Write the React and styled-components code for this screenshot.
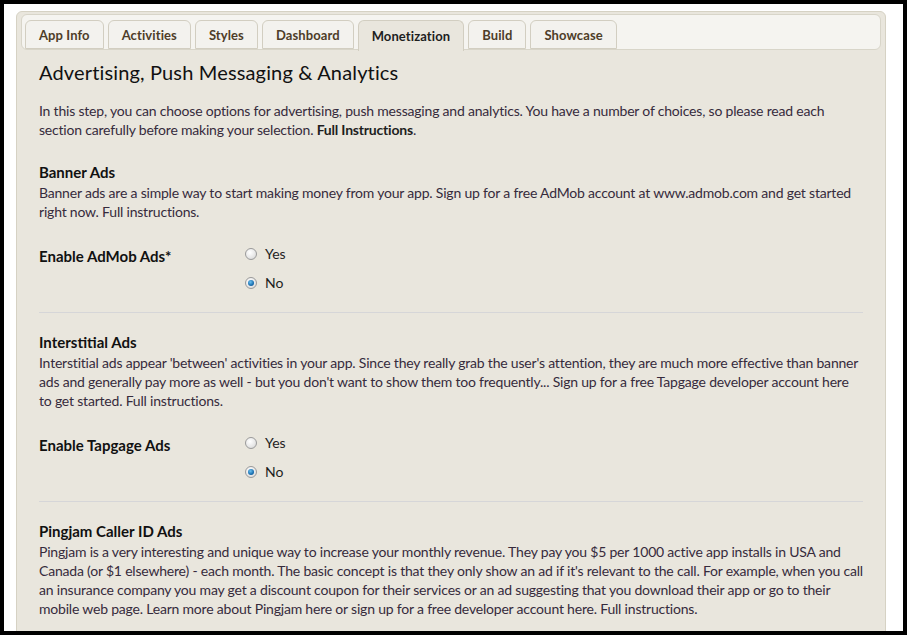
import React from 'react';
import styled, { createGlobalStyle } from 'styled-components';

const GlobalStyle = createGlobalStyle`
  html, body {
    margin: 0;
    padding: 0;
    background: #000;
  }
  body {
    font-family: Lato, "Open Sans", sans-serif;
  }
`;

const Frame = styled.div`
  margin: 4px;
  height: 627px;
  background: #fff;
  overflow: hidden;
  padding: 7px 17px 0 12px;
  box-sizing: border-box;
`;

const Panel = styled.div`
  background: #e9e6dd;
  border: 1px solid #d6d2c4;
  border-radius: 6px;
  padding: 2px 4px 0 4px;
  min-height: 640px;
`;

const TabStrip = styled.div`
  display: flex;
  gap: 4px;
  background: #f5f4f0;
  border: 1px solid #d8d5c9;
  border-radius: 6px;
  padding: 3px 0 0 3px;
  height: 31px;
  align-items: flex-end;
`;

const Tab = styled.div`
  height: ${p => (p.active ? '31px' : '29px')};
  margin-bottom: ${p => (p.active ? '-2px' : '0')};
  padding: 0 13px;
  display: flex;
  align-items: center;
  box-sizing: border-box;
  border: 1px solid #d2cec1;
  border-bottom: ${p => (p.active ? 'none' : '1px solid #d2cec1')};
  border-radius: 6px 6px 0 0;
  background: ${p => (p.active ? '#e9e6dd' : '#f3f2ee')};
  color: ${p => (p.active ? '#1e1e1e' : '#4e3d28')};
  font-size: 13px;
  letter-spacing: 0.1px;
  font-weight: 700;
  white-space: nowrap;
`;

const Content = styled.div`
  padding: 9px 18px 0 18px;
`;

const Title = styled.h1`
  margin: 0;
  font-size: 20px;
  letter-spacing: 0.15px;
  font-weight: 400;
  color: #111;
  line-height: 26px;
`;

const Text = styled.p`
  margin: ${p => (p.spaced ? '16px 0 4px' : '0')};
  font-size: 14px;
  letter-spacing: -0.2px;
  line-height: 19px;
  color: #362b3c;
`;

const Strong = styled.strong`
  color: #1e1e1e;
`;

const Section = styled.section`
  padding: 19px 0 0;
`;

const SectionTitle = styled.h2`
  margin: 0 0 1px;
  font-size: 15px;
  font-weight: 700;
  line-height: 20px;
  color: #111;
`;

const FormRow = styled.div`
  display: grid;
  grid-template-columns: 206px 1fr;
  margin-top: 23px;
  padding-bottom: 20px;
  border-bottom: 1px solid #d6d6d8;
`;

const FieldLabel = styled.div`
  font-size: 15px;
  font-weight: 700;
  color: #111;
  line-height: 20px;
  padding-top: 2px;
`;

const Options = styled.div`
  display: flex;
  flex-direction: column;
  gap: 10px;
`;

const Option = styled.label`
  display: flex;
  align-items: center;
  gap: 8px;
  font-size: 14px;
  color: #1e1e1e;
  line-height: 19px;
`;

const Radio = styled.span`
  width: 12px;
  height: 12px;
  border-radius: 50%;
  border: 1px solid #9a9a9a;
  box-sizing: border-box;
  background: radial-gradient(circle at 40% 35%, #ffffff 0%, #e6e6e6 60%, #cfcfcf 100%);
  display: flex;
  align-items: center;
  justify-content: center;
  &::after {
    content: '';
    display: ${p => (p.checked ? 'block' : 'none')};
    width: 6px;
    height: 6px;
    border-radius: 50%;
    background: radial-gradient(circle at 40% 35%, #6ac0ef 0%, #1a6fb0 60%, #0d4a80 100%);
  }
`;

const tabs = ['App Info', 'Activities', 'Styles', 'Dashboard', 'Monetization', 'Build', 'Showcase'];

const RadioField = ({ label, value }) => (
  <FormRow>
    <FieldLabel>{label}</FieldLabel>
    <Options>
      <Option><Radio checked={value === 'yes'} />Yes</Option>
      <Option><Radio checked={value === 'no'} />No</Option>
    </Options>
  </FormRow>
);

const App = () => (
  <>
    <GlobalStyle />
    <Frame>
      <Panel>
        <TabStrip>
          {tabs.map(t => (
            <Tab key={t} active={t === 'Monetization'}>{t}</Tab>
          ))}
        </TabStrip>
        <Content>
          <Title>Advertising, Push Messaging &amp; Analytics</Title>
          <Text spaced>
            In this step, you can choose options for advertising, push messaging and analytics. You have a number of choices, so please read each section carefully before making your selection. <Strong>Full Instructions</Strong>.
          </Text>
          <Section>
            <SectionTitle>Banner Ads</SectionTitle>
            <Text>
              Banner ads are a simple way to start making money from your app. Sign up for a free AdMob account at www.admob.com and get started right now. Full instructions.
            </Text>
            <RadioField label="Enable AdMob Ads*" value="no" />
          </Section>
          <Section>
            <SectionTitle>Interstitial Ads</SectionTitle>
            <Text>
              Interstitial ads appear 'between' activities in your app. Since they really grab the user's attention, they are much more effective than banner ads and generally pay more as well - but you don't want to show them too frequently... Sign up for a free Tapgage developer account here to get started. Full instructions.
            </Text>
            <RadioField label="Enable Tapgage Ads" value="no" />
          </Section>
          <Section>
            <SectionTitle>Pingjam Caller ID Ads</SectionTitle>
            <Text>
              Pingjam is a very interesting and unique way to increase your monthly revenue. They pay you $5 per 1000 active app installs in USA and Canada (or $1 elsewhere) - each month. The basic concept is that they only show an ad if it's relevant to the call. For example, when you call an insurance company you may get a discount coupon for their services or an ad suggesting that you download their app or go to their mobile web page. Learn more about Pingjam here or sign up for a free developer account here. Full instructions.
            </Text>
          </Section>
        </Content>
      </Panel>
    </Frame>
  </>
);

export default App;
